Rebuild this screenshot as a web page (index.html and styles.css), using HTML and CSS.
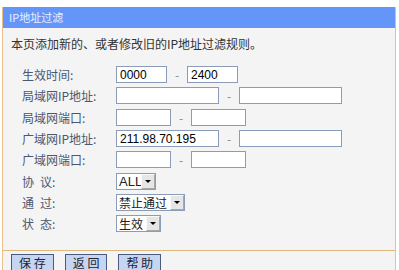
FILE: index.html
```html
<!DOCTYPE html>
<html lang="zh-CN">
<head>
  <meta charset="UTF-8" />
  <title>IP地址过滤</title>
  <link rel="stylesheet" href="styles.css">
</head>
<body>
  <div class="panel">
    <div class="title">IP地址过滤</div>
    <p class="desc">本页添加新的、或者修改旧的IP地址过滤规则。</p>

    <div class="form">
      <label>生效时间:</label>
      <div class="field">
        <input class="short" value="0000" /><span class="dash">-</span><input class="short" value="2400" />
      </div>

      <label>局域网IP地址:</label>
      <div class="field">
        <input class="wide" /><span class="dash">-</span><input class="wide" />
      </div>

      <label>局域网端口:</label>
      <div class="field">
        <input class="port" /><span class="dash">-</span><input class="port" />
      </div>

      <label>广域网IP地址:</label>
      <div class="field">
        <input class="wide" value="211.98.70.195" /><span class="dash">-</span><input class="wide" />
      </div>

      <label>广域网端口:</label>
      <div class="field">
        <input class="port" /><span class="dash">-</span><input class="port" />
      </div>

      <label><span class="gap">协</span>议:</label>
      <div class="field">
        <div class="select"><span class="value latin">ALL</span><span class="arrow"></span></div>
      </div>

      <label><span class="gap">通</span>过:</label>
      <div class="field">
        <div class="select"><span class="value">禁止通过</span><span class="arrow"></span></div>
      </div>

      <label><span class="gap">状</span>态:</label>
      <div class="field">
        <div class="select"><span class="value">生效</span><span class="arrow"></span></div>
      </div>
    </div>

    <div class="footer">
      <button>保 存</button>
      <button>返 回</button>
      <button>帮 助</button>
    </div>
  </div>
</body>
</html>
```

FILE: styles.css
```css
body {
  margin: 0;
  background-color: #ffffff;
  font-family: "Noto Sans CJK SC", "DejaVu Sans", sans-serif;
  font-size: 12px;
  color: #3a4050;
}

.panel {
  margin: 7px 0 0 2px;
  width: 392px;
  height: 263px;
  background-color: #f4f4f4;
  border-left: 1px solid #e9c08e;
  border-right: 1px solid #e9c08e;
}

.title {
  height: 21px;
  line-height: 21px;
  padding-left: 6px;
  background-color: #6496fa;
  color: #e8eeff;
  font-size: 11px;
}

.desc {
  margin: 0;
  padding: 8px 0 0 8px;
  height: 28px;
  line-height: 16px;
  color: #333;
}

.form {
  display: grid;
  grid-template-columns: 94px auto;
  grid-auto-rows: 21.3px;
  align-items: center;
  padding-left: 19px;
  height: 186px;
}

.form label {
  color: #4a5870;
}

.form label .gap {
  margin-right: 6px;
}

.field {
  display: flex;
  align-items: center;
}

input {
  box-sizing: border-box;
  height: 17px;
  border: 1px solid #8a9cb8;
  background: #ffffff;
  padding: 0 3px;
  font-family: "Liberation Sans", "DejaVu Sans", sans-serif;
  font-size: 12px;
  color: #000;
}

input.short {
  width: 51px;
}

input.wide {
  width: 103px;
}

input.port {
  width: 55px;
}

.dash {
  width: 20px;
  text-align: center;
  color: #888;
}

.select {
  display: flex;
  align-items: center;
  height: 17px;
  box-sizing: border-box;
  border: 1px solid #8a9cb8;
  background: #fff;
}

.select .value {
  padding: 0 3px 0 2px;
  line-height: 15px;
  color: #222;
}

.select .latin {
  font-family: "Liberation Sans", sans-serif;
  font-size: 13px;
  width: 20px;
  padding-right: 2px;
}

.select .arrow {
  position: relative;
  box-sizing: border-box;
  width: 14px;
  height: 15px;
  background: #e6e6e6;
  border: 1px solid;
  border-color: #fafafa #a8a8a8 #a8a8a8 #fafafa;
}

.select .arrow::after {
  content: "";
  position: absolute;
  left: 3px;
  top: 5px;
  border-left: 3px solid transparent;
  border-right: 3px solid transparent;
  border-top: 3px solid #000;
}

.footer {
  border-top: 1px solid #e0b87e;
  padding: 3px 0 0 8px;
  display: flex;
  gap: 11px;
}

button {
  height: 18px;
  padding: 0 7px;
  background-color: #c6d6f2;
  border: 1px solid #4a5a80;
  font-family: "Noto Sans CJK SC", sans-serif;
  font-size: 12px;
  line-height: 14px;
  color: #223;
}
```
